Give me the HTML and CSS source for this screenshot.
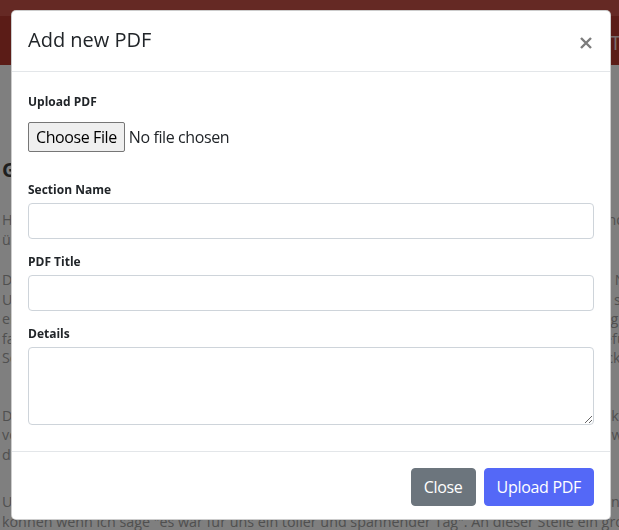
FILE: index.html
```html
<!DOCTYPE html>
<html lang="de">
<head>
<meta charset="utf-8">
<title>Add new PDF</title>
<link rel="stylesheet" href="styles.css">
</head>
<body>
<header class="navbar">
  <div class="nav-strip"></div>
  <div class="nav-main">
    <div class="brand"></div>
    <nav class="nav-links"><a class="nav-link">Termine</a></nav>
  </div>
</header>

<main class="page">
  <h2 class="page-title">Gemeinsamer Ausflug in den Tierpark</h2>
  <p class="para para-1">Heute möchten wir euch von unserem Ausflug in den Tierpark erzählen, auf den sich alle Kinder schon seit Wochen sehr gefreut haben. Schon früh am Morgen<br>überall strahlende Gesichter zu sehen.</p>
  <p class="para para-2">Die Kinder trafen sich pünktlich um acht Uhr an der Kita, wo der Bus schon auf uns wartete. Nach einer kurzen Begrüßung ging es dann endlich los und wir fuhren ein<br>Unterwegs wurden Lieder gesungen und die Kinder erzählten sich gegenseitig, welche Tiere sie am liebsten sehen wollten. Besonders die Elefanten standen hoch im Kurs<br>ein Kind meinte sogar, es würde gerne einen Elefanten mit nach Hause nehmen. Am Eingang des Tierparks angekommen, teilten wir uns in kleine Gruppen auf und jede Gruppe fuhr<br>fand ihren eigenen Weg durch den Park. Die erste Station waren die Pinguine, die gerade gefüttert wurden und dabei lustig hin und her watschelten, sodass alle lachen mussten<br>Schließlich trafen wir uns alle am großen Spielplatz wieder, wo wir gemeinsam unser Picknick auspackten und uns für den Rest des Tages stärkten. Danach ging es weiter</p>
  <p class="para para-3">Der Nachmittag verging wie im Flug und bevor wir es merkten, war es schon Zeit für die Rückfahrt. Müde, aber glücklich stiegen die Kinder wieder in den Bus und erzählten<br>von all den Dingen, die sie an diesem Tag erlebt hatten. Einige Kinder schliefen sogar schon während der Fahrt ein und mussten von ihren Eltern geweckt werden<br>danach wieder alle gesund angekommen.</p>
  <p class="para para-4">Unser Dank gilt allen Eltern, die uns bei diesem Ausflug begleitet und unterstützt haben. Ohne eure Hilfe wäre ein solcher Tag nicht möglich gewesen, wir denken wir<br>können wenn ich sage &quot;es war für uns ein toller und spannender Tag&quot;. An dieser Stelle ein großes Dankeschön</p>
</main>

<div class="backdrop"></div>

<div class="modal" role="dialog" aria-labelledby="modal-title">
  <div class="modal-header">
    <h5 class="modal-title" id="modal-title">Add new PDF</h5>
    <button type="button" class="btn-close" aria-label="Close">
      <svg class="close-icon" width="12" height="12" viewBox="0 0 12 12" aria-hidden="true">
        <path d="M1 1 L11 11 M11 1 L1 11" stroke="#7c7c7c" stroke-width="2.4" fill="none"/>
      </svg>
    </button>
  </div>
  <form class="modal-body">
    <div class="field field-file">
      <label class="field-label" for="pdf-file">Upload PDF</label>
      <input type="file" id="pdf-file" class="file-input">
    </div>
    <div class="field">
      <label class="field-label" for="section-name">Section Name</label>
      <input type="text" id="section-name" class="text-input">
    </div>
    <div class="field">
      <label class="field-label" for="pdf-title">PDF Title</label>
      <input type="text" id="pdf-title" class="text-input">
    </div>
    <div class="field">
      <label class="field-label" for="details">Details</label>
      <textarea id="details" class="text-area"></textarea>
    </div>
  </form>
  <div class="modal-footer">
    <button type="button" class="btn btn-secondary">Close</button>
    <button type="button" class="btn btn-primary">Upload PDF</button>
  </div>
</div>
</body>
</html>
```

FILE: styles.css
```css
* {
  box-sizing: border-box;
}

html, body {
  margin: 0;
  padding: 0;
}

body {
  width: 619px;
  height: 530px;
  overflow: hidden;
  background: #ffffff;
  font-family: "Open Sans", "Noto Sans", sans-serif;
  color: #212529;
  position: relative;
}

/* ---------- page behind the dialog ---------- */
.navbar {
  display: flex;
  flex-direction: column;
}

.nav-strip {
  height: 16px;
  background: #ca5248;
}

.nav-main {
  height: 49px;
  background: #b6382e;
  display: grid;
  grid-template-columns: 610px auto;
  align-items: center;
  white-space: nowrap;
  overflow: hidden;
}

.nav-links {
  display: flex;
  gap: 24px;
  padding-top: 3px;
}

.nav-link {
  font-size: 20px;
  color: #f2d9d6;
}

.page {
  padding-left: 2px;
  white-space: nowrap;
  color: #a0a0a0;
}

.page-title {
  margin: 93px 0 28px;
  font-size: 20px;
  line-height: 24px;
  font-weight: 700;
  color: #3e3e3e;
}

.para {
  margin: 0;
  font-size: 14.3px;
  line-height: 19.5px;
}

.para-1 { margin-bottom: 21px; }
.para-2 { margin-bottom: 38px; }
.para-3 { margin-bottom: 28px; }

.backdrop {
  position: fixed;
  inset: 0;
  background: rgba(0, 0, 0, 0.5);
}

/* ---------- dialog ---------- */
.modal {
  position: absolute;
  top: 10px;
  left: 11px;
  width: 600px;
  background: #ffffff;
  border: 1px solid rgba(0, 0, 0, 0.2);
  border-radius: 5px;
  display: flex;
  flex-direction: column;
}

.modal-header {
  display: flex;
  align-items: flex-start;
  padding: 14px 16px 16px;
  border-bottom: 1px solid #e3e6e9;
}

.modal-title {
  margin: 0;
  font-size: 20px;
  line-height: 30px;
  font-weight: 500;
  color: #212529;
}

.btn-close {
  margin-left: auto;
  margin-right: 2px;
  padding: 0;
  border: 0;
  background: transparent;
  display: flex;
  cursor: pointer;
}

.close-icon {
  display: block;
  margin-top: 12px;
}

.modal-body {
  margin: 0;
  padding: 21px 16px 12px;
  display: flex;
  flex-direction: column;
}

.field {
  display: flex;
  flex-direction: column;
  margin-bottom: 14px;
}

.field-file {
  margin-bottom: 29px;
}

.field-label {
  font-size: 12px;
  line-height: 18px;
  font-weight: 700;
  color: #212529;
  margin-bottom: 4px;
}

.file-input {
  margin-top: 7px;
  height: 30px;
  font-family: "Open Sans", "Noto Sans", sans-serif;
  font-size: 16px;
  letter-spacing: -0.4px;
  color: #212529;
  padding: 0;
}

.file-input::file-selector-button {
  font-family: "Open Sans", "Noto Sans", sans-serif;
  font-size: 16px;
  letter-spacing: -0.4px;
  height: 30px;
  padding: 0 7px;
  margin-right: 4px;
  border: 1px solid #767676;
  border-radius: 2px;
  background: #efefef;
  color: #000000;
}

.text-input {
  height: 36px;
  width: 100%;
  border: 1px solid #ced4da;
  border-radius: 4px;
  padding: 6px 12px;
  font-family: "Open Sans", "Noto Sans", sans-serif;
  font-size: 16px;
  background: #ffffff;
}

.text-area {
  height: 78px;
  width: 100%;
  border: 1px solid #ced4da;
  border-radius: 4px;
  padding: 6px 12px;
  font-family: "Open Sans", "Noto Sans", sans-serif;
  font-size: 16px;
  resize: vertical;
  background: #ffffff;
}

.modal-footer {
  display: flex;
  justify-content: flex-end;
  gap: 8px;
  padding: 16px 16px 13px;
  border-top: 1px solid #e3e6e9;
}

.btn {
  height: 38px;
  padding: 0 12px;
  border: 1px solid transparent;
  border-radius: 4px;
  font-family: "Open Sans", "Noto Sans", sans-serif;
  font-size: 16px;
  letter-spacing: -0.3px;
  line-height: 24px;
  color: #ffffff;
  cursor: pointer;
}

.btn-secondary {
  background: #6c757d;
  border-color: #6c757d;
}

.btn-primary {
  background: #5468f7;
  border-color: #5468f7;
}
```
